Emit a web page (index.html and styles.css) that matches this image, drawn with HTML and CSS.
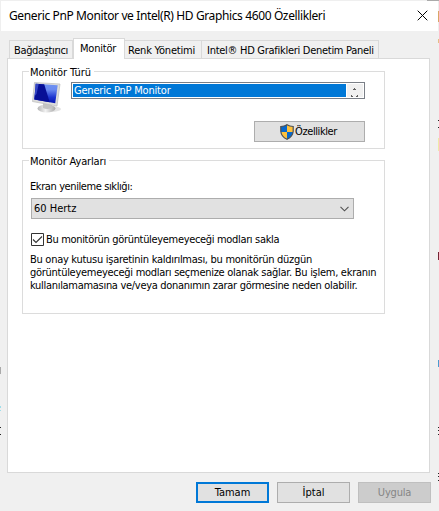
FILE: index.html
```
<!DOCTYPE html>
<html lang="tr">
<head>
<meta charset="utf-8">
<title>Generic PnP Monitor</title>
<link rel="stylesheet" href="styles.css">
</head>
<body>
<div class="window">
  <header class="titlebar">
    <h1>Generic PnP Monitor ve Intel(R) HD Graphics 4600 Özellikleri</h1>
    <svg class="close" width="11" height="11" viewBox="0 0 11 11"><path d="M.7.7l9.6 9.6M10.3.7L.7 10.3" stroke="#000" stroke-width="1" fill="none"/></svg>
  </header>
  <nav class="tabs">
    <span class="tab adapter">Bağdaştırıcı</span>
    <span class="tab active">Monitör</span>
    <span class="tab color">Renk Yönetimi</span>
    <span class="tab intel">Intel® HD Grafikleri Denetim Paneli</span>
  </nav>
  <main class="page">
    <section class="group type">
      <h2 class="legend type-title">Monitör Türü</h2>
      <div class="device">
        <svg class="monitor" width="30" height="34" viewBox="0 0 30 34">
          <defs>
            <linearGradient id="screen" x1="0" y1="0" x2="0" y2="1"><stop offset="0" stop-color="#6f93f2"/><stop offset=".3" stop-color="#6a8af0"/><stop offset=".7" stop-color="#1c34cf"/><stop offset="1" stop-color="#0614b0"/></linearGradient>
            <linearGradient id="base" x1="0" y1="0" x2="1" y2="0"><stop offset="0" stop-color="#b5b5b5"/><stop offset=".45" stop-color="#f2f2f2"/><stop offset="1" stop-color="#a8a8a8"/></linearGradient>
          </defs>
          <ellipse cx="19" cy="27" rx="10" ry="3" fill="#e4e4e4"/>
          <ellipse cx="14.500" cy="26.500" rx="9" ry="4" fill="url(#base)"/>
          <path d="M11 21l9 1v4q-5 2-9 0z" fill="#c3c3c3"/>
          <path d="M2.500.500l25.500 1.500-3 22L.5 19.500z" fill="#dededc" stroke="#bbb" stroke-width=".7"/>
          <path d="M3.700 1.700l22 1.500-2.500 18L2.300 17.500z" fill="url(#screen)"/>
          <path d="M3.700 1.700l8.500.6 5.500 18-15.400-2.800z" fill="#070f96"/>
          <path d="M3.700 1.700l3 .2L4.500 12l-1.700 2z" fill="#4a60d8" opacity=".7"/>
        </svg>
        <div class="listbox">
          <span class="selected">Generic PnP Monitor</span>
          <svg class="spin" width="16" height="13" viewBox="0 0 16 13"><path fill="#606060" d="M7 4h1v1h1v1H6V5h1zM4 11h1v1h1v1H4zM10 11h1v2H9v-1h1z"/></svg>
        </div>
      </div>
      <button class="button properties">
        <svg width="14" height="16" viewBox="0 0 14 16">
          <path d="M7 .5Q4.500 2.400.8 2.500v4.700Q1.200 12.500 7 15.500 12.800 12.500 13.200 7.200V2.500Q9.500 2.400 7 .5z" fill="#ffc13b"/>
          <path d="M7 .5Q4.500 2.400.8 2.500V8H7zM7 8h6.200Q12.500 12.500 7 15.500z" fill="#0868cc"/>
          <path d="M7 .7Q4.500 2.400.8 2.500v4.700Q1.200 12.500 7 15.300 12.800 12.500 13.200 7.200V2.500Q9.500 2.400 7 .7z" fill="none" stroke="#4c5054" stroke-width="1.200"/>
        </svg><span>Özellikler</span>
      </button>
    </section>
    <section class="group settings">
      <h2 class="legend settings-title">Monitör Ayarları</h2>
      <p class="rate-label">Ekran yenileme sıklığı:</p>
      <div class="combo"><span>60 Hertz</span>
        <svg width="9" height="6" viewBox="0 0 9 6"><path d="M.5.8l4 4 4-4" fill="none" stroke="#505050" stroke-width="1.100"/></svg>
      </div>
      <label class="check">
        <svg width="13" height="13" viewBox="0 0 13 13"><path d="M.5.500h12v12H.5z" fill="#fff" stroke="#333"/><path d="M2 6.500l3 3 6-6" fill="none" stroke="#333" stroke-width="1.100"/></svg>
        <span>Bu monitörün görüntüleyemeyeceği modları sakla</span>
      </label>
      <p class="note">Bu onay kutusu işaretinin kaldırılması, bu monitörün düzgün<br>görüntüleyemeyeceği modları seçmenize olanak sağlar. Bu işlem, ekranın<br><span class="last">kullanılamamasına ve/veya donanımın zarar görmesine neden olabilir.</span></p>
    </section>
  </main>
  <footer class="actions">
    <button class="button primary">Tamam</button>
    <button class="button">İptal</button>
    <button class="button disabled" disabled>Uygula</button>
  </footer>
  <svg class="backdrop" width="439" height="511" viewBox="0 0 439 511">
    <path d="M0 0h439v1H0zM0 1h1v30H0z" fill="#efefef"/><path d="M427 0h12v1h-12z" fill="#aaa"/>
    <path d="M438 1h1v29h-1z" fill="#eee"/>
    <path d="M438 11h1v11h-1z" fill="#d9a566"/><path d="M438 39h1v4h-1z" fill="#e4bf87"/>
    <path d="M438 120h1v1h-1zM438 127h1v1h-1zM438 427h1v1h-1zM438 430h1v1h-1zM438 434h1v1h-1zM438 473h1v1h-1zM438 476h1v1h-1zM438 480h1v1h-1zM0 427h1v1H0zM0 434h1v1H0z" fill="#222"/>
    <path d="M438 138h1v13h-1z" fill="#eee9a8"/><path d="M438 252h1v8h-1z" fill="#742434"/>
    <path d="M438 360h1v7h-1z" fill="#4a9bd0"/><path d="M0 367h1v7H0z" fill="#aaa"/>
    <path d="M0 406h1v2H0zM0 410h1v1H0z" fill="#9edeea"/>
  </svg>
</div>
</body>
</html>
```
FILE: styles.css
```
* { box-sizing: border-box; }
body { margin: 0; }
h1, h2, p { margin: 0; font-weight: normal; }
svg { display: block; flex: none; }
.window {
  position: relative;
  width: 439px;
  height: 511px;
  padding-top: 1px;
  overflow: hidden;
  background: #f0f0f0;
  color: #000;
  font: 11px/13px "DejaVu Sans Condensed", "DejaVu Sans", sans-serif;
  letter-spacing: -0.28px;
  white-space: nowrap;
}
.backdrop { position: absolute; inset: 0; pointer-events: none; }
.titlebar {
  display: flex;
  justify-content: space-between;
  align-items: center;
  width: 438px;
  height: 30px;
  padding: 0 10px 0 9px;
  background: #fff;
}
.close { margin: 0 0 2px; }
h1 { font: 12px/30px "Noto Sans", sans-serif; letter-spacing: -0.38px; }
.tabs { display: flex; align-items: flex-end; height: 27px; padding-left: 9px; }
.tab {
  height: 18px;
  padding: 3px 0 0 5px;
  border: 1px solid #d9d9d9;
  border-bottom: 0;
  background: #f0f0f0;
}
.tab + .tab { border-left: 0; }
.adapter { width: 64px; padding-left: 4px; letter-spacing: -0.36px; }
.active {
  z-index: 1;
  width: 52px;
  height: 21px;
  margin-bottom: -1px;
  padding: 3px 0 0 6px;
  background: #fff;
  letter-spacing: -0.2px;
}
.tab.active { border-left: 1px solid #d9d9d9; }
.color { width: 77px; padding-left: 3px; letter-spacing: -0.2px; }
.intel { width: 177px; }
.page {
  width: 423px;
  height: 415px;
  margin-left: 7px;
  padding: 12px 0 0 14px;
  border: 1px solid #d9d9d9;
  background: #fff;
}
.group { width: 363px; padding: 0 8px; border: 1px solid #dcdcdc; }
.type { height: 78px; }
.settings { height: 154px; margin-top: 11px; }
.legend {
  width: max-content;
  height: 13px;
  margin: -6px 0 0 -2px;
  padding: 0 3px 0 1px;
  background: #fff;
  font-size: 11px;
  line-height: 13px;
}
.type-title { letter-spacing: -0.08px; }
.settings-title { letter-spacing: -0.15px; }
.device { display: flex; height: 35px; margin-top: 3px; }
.monitor { margin-left: 1px; }
.listbox {
  display: flex;
  width: 294px;
  height: 17px;
  margin-left: 9px;
  padding: 1px;
  border: 1px solid #7a7f87;
  background: #fff;
}
.selected {
  flex: 1;
  margin-right: 1px;
  padding-left: 1px;
  background: #0078d7;
  color: #fff;
  letter-spacing: -0.2px;
}
.spin { background: #f0f0f0; }
.button {
  display: flex;
  justify-content: center;
  align-items: center;
  width: 73px;
  height: 21px;
  padding: 0;
  border: 1px solid #adadad;
  background: #e1e1e1;
  color: #000;
  font: inherit;
  letter-spacing: 0;
}
.properties { width: 111px; margin: 4px 0 0 223px; padding-right: 2px; gap: 1px; letter-spacing: -0.4px; }
.rate-label { margin: 12px 0 0 -1px; letter-spacing: -0.4px; }
.combo {
  display: flex;
  justify-content: space-between;
  align-items: center;
  width: 323px;
  height: 21px;
  margin-top: 5px;
  padding: 0 4px 0 2px;
  border: 1px solid #adadad;
  background: #e1e1e1;
  letter-spacing: 0;
}
.check { display: flex; gap: 2px; margin-top: 14px; letter-spacing: -0.33px; }
.check span { padding-top: 1px; line-height: 12px; }
.note { margin: 7px 0 0 -1px; }
.last { letter-spacing: -0.3px; }
.actions { display: flex; gap: 8px; margin: 9px 0 0 196px; }
.primary { border: 2px solid #0078d7; }
.disabled { border-color: #bfbfbf; background: #ccc; color: #858585; letter-spacing: -0.2px; }
```
